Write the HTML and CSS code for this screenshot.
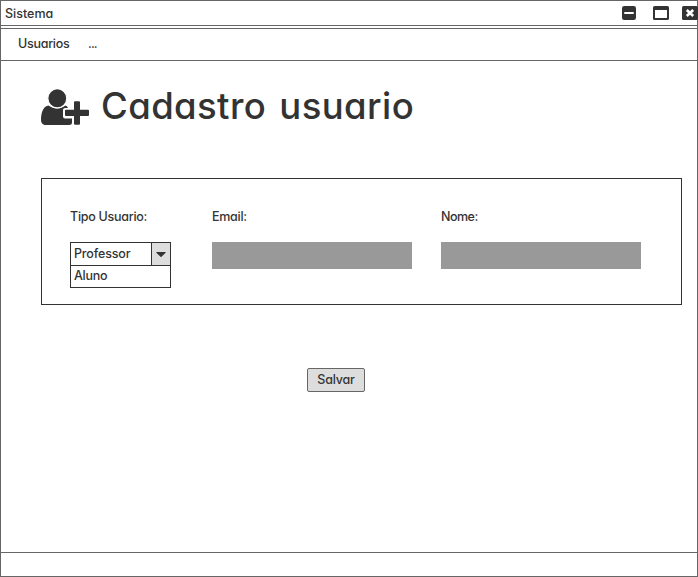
FILE: index.html
```html
<!DOCTYPE html>
<html lang="pt-BR">
<head>
<meta charset="utf-8">
<title>Sistema</title>
<link rel="stylesheet" href="styles.css">
</head>
<body>
<div class="window">
  <header class="titlebar">
    <span class="window-title">Sistema</span>
    <div class="controls">
      <svg width="14" height="14" viewBox="0 0 14 14"><rect width="14" height="14" rx="2.3" fill="#333"/><rect x="2.2" y="6" width="9.6" height="2" rx=".6" fill="#fff"/></svg>
      <svg width="16" height="14" viewBox="0 0 16 14"><rect width="16" height="14" rx="1.6" fill="#333"/><rect x="2" y="4" width="12" height="8" fill="#fff"/></svg>
      <svg width="16" height="14" viewBox="0 0 16 14"><rect width="16" height="14" rx="1.6" fill="#333"/><path d="M4.800 4L11.200 10M11.200 4L4.800 10" stroke="#fff" stroke-width="2.600"/></svg>
    </div>
  </header>
  <nav class="menu"><span class="menu-item">Usuarios</span><span class="more">...</span></nav>
  <main class="content">
    <div class="heading">
      <svg class="user-icon" width="48" height="36" viewBox="0 0 48 36" fill="#333">
        <path d="M7.500 16.500C3 17 0 22.500 0 31C0 34 2 36 5 36H28Q31 36 31 33.500V29.500H24Q22 29.500 22 27.500V21Q22 19 24 19H27Q26.500 17 24.500 16.500C19 20.500 13 20.500 7.500 16.500Z"/>
        <ellipse cx="16.300" cy="9.300" rx="9.500" ry="9.600" stroke="#fff" stroke-width="1.200"/>
        <path d="M34 12.300H38Q39 12.300 39 13.300V20.800H47Q48 20.800 48 21.800V26Q48 27 47 27H39V34.800Q39 35.800 38 35.800H34Q33 35.800 33 34.800V27H25Q24 27 24 26V21.800Q24 20.800 25 20.800H33V13.300Q33 12.300 34 12.300Z"/>
      </svg>
      <h1>Cadastro usuario</h1>
    </div>
    <section class="form">
      <div class="field type-field">
        <label>Tipo Usuario:</label>
        <div class="dropdown">
          <div class="selected"><span class="value">Professor</span><span class="arrow"><svg width="10" height="5" viewBox="0 0 10 5"><path d="M.7 0H9.300Q10 .4 9.400 1L5.500 4.700Q5 5.100 4.500 4.700L.6 1Q0 .4 .7 0Z" fill="#333"/></svg></span></div>
          <div class="option">Aluno</div>
        </div>
      </div>
      <div class="field email-field"><label>Email:</label><div class="input"></div></div>
      <div class="field"><label class="name-label">Nome:</label><div class="input"></div></div>
    </section>
    <button class="save">Salvar</button>
  </main>
  <footer class="status"></footer>
</div>
</body>
</html>
```
FILE: styles.css
```css
* { box-sizing: border-box; }
body { margin: 0; background: #fff; }
svg { display: block; }
.window {
  width: 698px;
  height: 577px;
  border: 1px solid #666;
  display: flex;
  flex-direction: column;
  color: #333;
  font: 500 12.5px/16px Inter, "Liberation Sans", sans-serif;
  letter-spacing: -0.27px;
  font-feature-settings: "cv11", "ss03";
}
.titlebar {
  height: 28px;
  flex: none;
  border-bottom: 1px solid #666;
  background: linear-gradient(#666, #666) 0 24px / 100% 1px no-repeat;
  display: flex;
  justify-content: space-between;
  padding: 5px 0 0 4px;
}
.window-title { letter-spacing: 0; }
.controls { display: flex; margin-right: -1px; }
.controls svg:nth-child(2) { margin: 0 13px 0 17px; }
.menu {
  height: 32px;
  flex: none;
  border-bottom: 1px solid #666;
  padding: 7px 0 0 17px;
  display: flex;
}
.menu-item { width: 70px; }
.more { letter-spacing: -0.9px; }
.content { flex: 1; display: flex; flex-direction: column; padding-left: 40px; }
.heading { display: flex; height: 117px; padding-top: 28px; }
.user-icon { margin-right: 12px; }
h1 {
  margin: -6px 0 0;
  font-size: 36.5px;
  line-height: 46px;
  font-weight: 500;
  letter-spacing: 0.4px;
  word-spacing: 3px;
  white-space: nowrap;
}
.form {
  width: 641px;
  height: 127px;
  border: 1px solid #333;
  display: flex;
  padding: 30px 0 0 28px;
}
.field { display: flex; flex-direction: column; }
.field label { height: 33px; white-space: nowrap; }
.field .name-label { letter-spacing: -0.5px; }
.type-field { width: 142px; }
.email-field { width: 229px; }
.dropdown { width: 101px; height: 46px; border: 1px solid #333; }
.selected { display: flex; height: 23px; border-bottom: 1px solid #333; padding: 3px 0 0 3px; justify-content: space-between; }
.value { letter-spacing: -0.15px; }
.arrow { width: 19px; height: 22px; margin-top: -3px; padding-top: 1px; border-left: 1px solid #333; background: #ddd; display: flex; align-items: center; justify-content: center; }
.option { padding: 2px 0 0 3px; }
.input { width: 200px; height: 27px; background: #999; }
.save {
  width: 58px;
  height: 24px;
  margin: 63px 0 0 266px;
  padding: 0;
  border: 1px solid #666;
  border-radius: 2px;
  background: #ddd;
  color: #333;
  font: inherit;
  letter-spacing: -0.2px;
  font-feature-settings: inherit;
}
.status { height: 24px; border-top: 1px solid #666; }
```
